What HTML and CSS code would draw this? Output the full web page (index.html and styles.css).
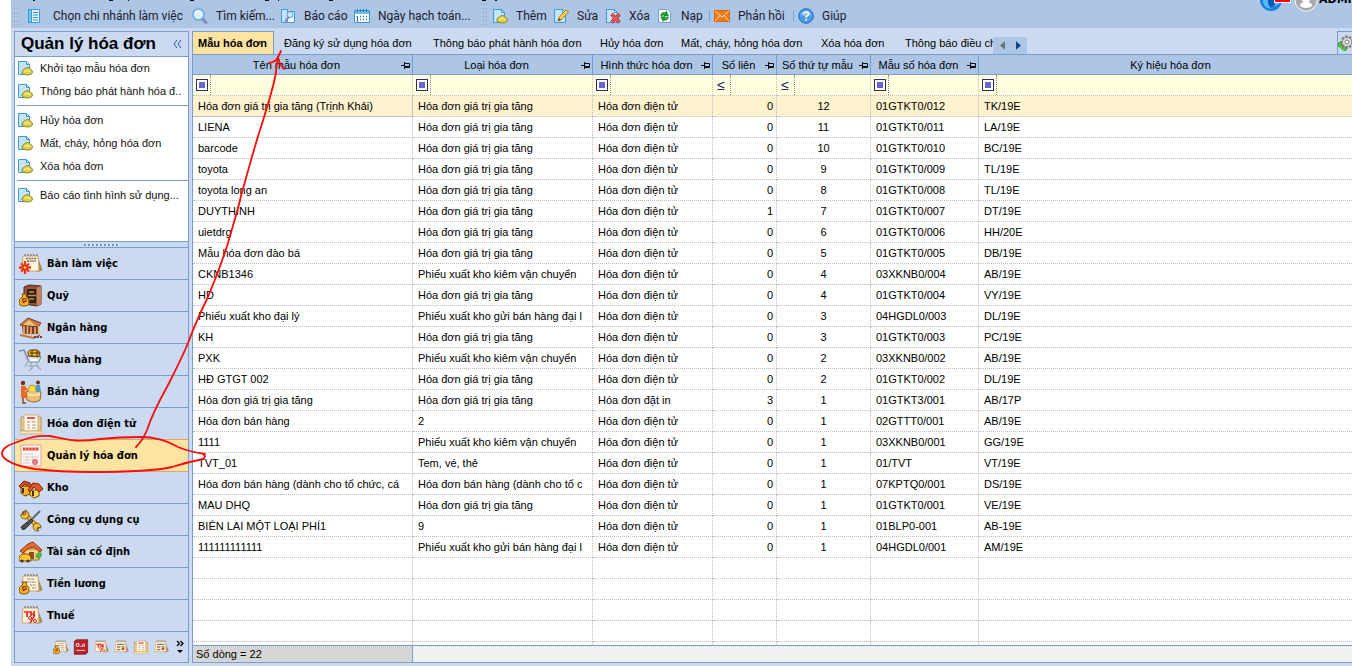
FILE: index.html
```html
<!DOCTYPE html>
<html lang="vi">
<head>
<meta charset="utf-8">
<title>Quản lý hóa đơn</title>
<link rel="stylesheet" href="styles.css">
</head>
<body>
<svg class="defs" aria-hidden="true">
  <defs>
    <symbol id="page" viewBox="0 0 16 16"><path d="M1.500 1.500h8l3 3v10h-11z" fill="#c4e4f8" stroke="#3d9ad8"/><path d="M9.500 1.500v3h3z" fill="#fff" stroke="#3d9ad8"/></symbol>
    <symbol id="doc" viewBox="0 0 16 16"><use href="#page"/><path d="M4 12.500h3" stroke="#8fc0e4"/><path d="M7 9.500q1-2 3.500-2t3 2q2 .5 2 2.500t-2.500 2.500q-2.500 1.200-5 0-3 .2-3-2.500 0-2 2-2.500z" fill="#ddd04e" stroke="#8d8622"/><path d="M7 11.500q3-2 6 0" stroke="#faf6a5" fill="none"/></symbol>
    <symbol id="branch" viewBox="0 0 16 16"><path d="M2.500 1.500h11v13h-11z" fill="#e6f5fd" stroke="#2f9bd6"/><path d="M2.500 1.500h3v13h-3z" fill="#7cc4ec" stroke="#2f9bd6"/><path d="M7 4.500h5M7 7h5M7 9.500h5M7 12h5" stroke="#2f8fca"/></symbol>
    <symbol id="search" viewBox="0 0 16 16"><path d="M10 10.500l4 4" stroke="#8c86c8" stroke-width="3" stroke-linecap="round"/><circle cx="6.500" cy="6.500" r="5.500" fill="#d9f1fd" stroke="#6fa9dc" stroke-width="1.500"/><path d="M3.500 6q.5-3 3-3" stroke="#fff" stroke-width="1.500" fill="none"/></symbol>
    <symbol id="report" viewBox="0 0 16 16"><path d="M1.500 1.500h6v13h-6z" fill="#c4e4f8" stroke="#3d9ad8"/><path d="M7.500 3.500h7v11h-7z" fill="#eff9fe" stroke="#3d9ad8"/><path d="M9 9l-4 4.500" stroke="#9a7fc4" stroke-width="2"/><circle cx="10" cy="6.500" r="3" fill="#c9e8fb" stroke="#4f9ddb"/></symbol>
    <symbol id="calendar" viewBox="0 0 16 16"><path d="M.5 2.500h15v12H.5z" fill="#fff" stroke="#3b96cc"/><path d="M1 3h14v3H1z" fill="#6dbbe5"/><path d="M3.500 1v3M6.500 1v3M9.500 1v3M12.500 1v3" stroke="#237db4"/><path d="M6 8.500h1m2 0h1m2 0h1M6 11.500h1m2 0h1m2 0h1" stroke="#1d75ac" stroke-width="1.500"/><path d="M3.500 8v5M2.500 13h2M2.500 9h1" stroke="#1d75ac"/></symbol>
    <symbol id="edit" viewBox="0 0 16 16"><use href="#page"/><path d="M5 13l1-3.500L13 2l2.500 2L8 12z" fill="#ffd15a" stroke="#a97817"/><path d="M5 13l1-3 2 1.700z" fill="#725019"/></symbol>
    <symbol id="delete" viewBox="0 0 16 16"><use href="#page"/><path d="M6.500 6l8 8.500M14.500 6l-8 8.500" stroke="#a02a35" stroke-width="3.500"/><path d="M6.500 6l8 8.500M14.500 6l-8 8.500" stroke="#f05a5e" stroke-width="2"/></symbol>
    <symbol id="refresh" viewBox="0 0 16 16"><path d="M1.500 1.500h9l3 3v10h-12z" fill="#f7fcff" stroke="#71a3cc"/><path d="M3.500 7.500Q4.500 3.500 8.500 4.700L9.500 3l2 5H6.500l1-1.500Q5.500 6 5 7.900zM11.500 9q-1 4-4.500 3l-1 1.500L3.700 8.800h5L7.500 10.500q2 .5 2.500-1.500z" fill="#19a025" stroke="#117a1a" stroke-width=".5"/></symbol>
    <symbol id="mail" viewBox="0 0 16 16"><path d="M.5 2.500h15v11H.5z" fill="#f77a18" stroke="#d9690e"/><path d="M1 3l7 6 7-6M1 13l5-5.500M15 13l-5-5.500" fill="none" stroke="#ffe1b8"/></symbol>
    <symbol id="help" viewBox="0 0 16 16"><circle cx="8" cy="8" r="7.300" fill="#4b9aec" stroke="#246bb8"/><path d="M2.500 7Q4 2.500 8 2.500T13.500 7Q8 9 2.500 7z" fill="#80bdf8"/><path d="M5.800 6Q6 4 8.200 4t2.200 2Q10.400 7.300 8.200 8.500v1.300" stroke="#fff" stroke-width="1.700" fill="none"/><path d="M7.300 11h1.800v1.700H7.300z" fill="#fff"/></symbol>
    <symbol id="gear" viewBox="0 0 16 16"><circle cx="9" cy="7" r="5.500" fill="#ddd" stroke="#777" stroke-width="2" stroke-dasharray="2.400 1.500"/><circle cx="9" cy="7" r="4.700" fill="#dedede" stroke="#888"/><circle cx="9" cy="7" r="2" fill="#fff" stroke="#777"/><path d="M1 7l3 2-1 1q2 3.500 6 3l-1 2.500Q3.500 15.500 1.500 11L0 11.500z" fill="#5cc83c" stroke="#278a1b" stroke-width=".7"/></symbol>
    <symbol id="pin" viewBox="0 0 10 7"><path d="M0 3.500h3M3.500 0v7M4 1.500h4.500v4H4M4 4.500h5" fill="none" stroke="#111"/></symbol>

    <symbol id="sheet" viewBox="0 0 24 24"><path d="M18 4l5 14-5 2z" fill="#b48a4d" stroke="#8a6534" stroke-width=".6"/><path d="M4 4h15l1 15H3z" fill="#fdf3dc" stroke="#caa774"/><path d="M6 4V2m3 2V2m3 2V2m3 2V2m3 2V2" stroke="#6c6252"/></symbol>
    <symbol id="bag" viewBox="0 0 24 24"><path d="M4 12l-1-2h5l-1 2q4 3 3 8-1 2-5 2t-5-2q-1-5 4-8z" fill="#f4b928" stroke="#7a4a0d"/><path d="M7.500 15q-4-1-4 1t3 1-3 2" stroke="#a12a0d" stroke-width="1.300" fill="none"/></symbol>
    <symbol id="desk" viewBox="0 0 24 24"><use href="#sheet"/><path d="M7 6.500h10M8 9h9" stroke="#76695a" stroke-width="1.300" stroke-dasharray="2 .7"/><path d="M6 9v13M0 15.500h12M2 11.500l8 8M10 11.500l-8 8" stroke="#f0371b" stroke-width="2.300"/><circle cx="6" cy="15.500" r="2" fill="#ffbf3a" stroke="#d32510"/></symbol>
    <symbol id="safe" viewBox="0 0 24 24"><path d="M5 3l5-2 12 1v18l-4 2-13-2z" fill="#9a5338" stroke="#55281a"/><path d="M8 5h9v14H8z" fill="#2e241b"/><path d="M9 11.500h8M10 8h5M10 15h5" stroke="#bd8b47" stroke-width="1.500"/><path d="M18 4l4-2v18l-4 2z" fill="#c48359"/><use href="#bag"/></symbol>
    <symbol id="bank" viewBox="0 0 24 24"><path d="M1 9l8-7 13 5-3 4z" fill="#d47b43" stroke="#743919"/><path d="M4 9l6-5 7 6z" fill="#f2c17c"/><path d="M3 10h17v8H4z" fill="#713c23"/><path d="M5 10v9M8.500 10v9M12 11v9M16 11v8M19.500 10v8" stroke="#eeb274" stroke-width="1.600"/><path d="M1 18l14 3 6-3v2l-6 3-14-3z" fill="#bb764a"/><path d="M15 21h8" stroke="#62402e" stroke-width="2" stroke-dasharray="2 1"/></symbol>
    <symbol id="buy" viewBox="0 0 24 24"><path d="M0 3l5-1 4 10h11" fill="none" stroke="#818b98" stroke-width="1.500"/><path d="M8 8h14l-2 6H10z" fill="#dce4ed" stroke="#7c8793"/><path d="M10 8q-3-6 3-6 7-1 8 3l-1 4z" fill="#f3b01f" stroke="#5e3b10"/><path d="M13 2v7M18 2v7M11 5h10" stroke="#413018"/><path d="M9 13l-3 6M12 14l1 6-3 3M17 13l2 6 3 3M9 18h9" fill="none" stroke="#a5afba" stroke-width="1.500"/><path d="M12 12h6" stroke="#fff" stroke-width="2"/></symbol>
    <symbol id="sell" viewBox="0 0 24 24"><path d="M7 12q8-4 15 0l-1 8q-6 4-13 0z" fill="#edbf74" stroke="#9a6a2a"/><path d="M9 14q6 2 12 0" stroke="#fae4ad" fill="none" stroke-width="2"/><path d="M8 11l4-6 4 1 1 5" fill="#ffe23b" stroke="#c38e18"/><circle cx="4" cy="3" r="2.200" fill="#6f3216"/><path d="M2 6h4l4 5-4-1 2 8H2z" fill="#ee6a20"/><path d="M4 18v5h3" stroke="#8a4a24" stroke-width="1.500" fill="none"/><circle cx="19" cy="2.500" r="2" fill="#62351e"/><path d="M17 5h4l1 7h-5z" fill="#4d99d2"/></symbol>
    <symbol id="einvoice" viewBox="0 0 24 24"><path d="M2 5h20v14H2z" fill="#eecb8c" stroke="#be9455"/><path d="M5 3h14v16H5z" fill="#fffaf0" stroke="#caab7b"/><path d="M8 6h8" stroke="#e85440" stroke-width="2"/><path d="M8 10h3m2 0h4M8 13h3m2 0h4M8 16h3m2 0h4" stroke="#b1966b"/><path d="M1 19h22v3H1z" fill="#fbe7ba" stroke="#c6a164" stroke-width=".7"/></symbol>
    <symbol id="invoice" viewBox="0 0 24 24"><path d="M2 1h20v21H2z" fill="#fdf7f3" stroke="#d4aaa0"/><path d="M4 5h16" stroke="#f23f31" stroke-width="3" stroke-dasharray="2.500 .6"/><path d="M4 10h10M4 13h16M4 16h16M4 19h8M8 12v7M14 12v7" stroke="#d5cbd0"/><circle cx="16" cy="18" r="2.500" fill="#f58584" stroke="#d45a67"/></symbol>
    <symbol id="stock" viewBox="0 0 24 24"><path d="M2 10h9v8l-5 2-4-3z" fill="#f1b72a" stroke="#723a0d"/><path d="M0 10l5-5 6 2 3 5-4-1-4-3-4 4z" fill="#de4a22" stroke="#74220f"/><path d="M11 14h9v6l-5 2-4-3z" fill="#ffdc3f" stroke="#78450c"/><path d="M9 14l5-7 6 1 4 5-4 3-5-5-4 5z" fill="#e25625" stroke="#80230f"/><path d="M4 12v5M14 15v5" stroke="#473019" stroke-width="2"/></symbol>
    <symbol id="tools" viewBox="0 0 24 24"><path d="M5 5l14 14" stroke="#704b12" stroke-width="4" stroke-linecap="round"/><path d="M5 5l14 14" stroke="#f2b33d" stroke-width="2.500"/><path d="M2 6q-1 5 5 5l3-3Q10 3 6 2l1 4-2 1z" fill="#ffc43e" stroke="#825710"/><path d="M17 15q5 0 5 5l-3-1-1 2 2 2q-6 0-6-5z" fill="#ffc43e" stroke="#825710"/><path d="M21 3l-8 8" stroke="#5c6876" stroke-width="2"/><path d="M12 11l2 2-8 8q-3 2-4-2z" fill="#56534d" stroke="#292725"/></symbol>
    <symbol id="asset" viewBox="0 0 24 24"><path d="M5 9h15v11H5z" fill="#f6d080" stroke="#9a6d2d"/><path d="M1 11L9 4l5-2 9 8-2 2-6-5-5 1-6 5z" fill="#ee6a2c" stroke="#8e3313"/><path d="M10 12h5v7h-5z" fill="#865027"/><path d="M0 17l3-3h6l3 3v4H0z" fill="#ffc331" stroke="#87570d"/><circle cx="3" cy="21" r="1.500" fill="#333"/><circle cx="9" cy="21" r="1.500" fill="#333"/><path d="M18 13l4-1 1 4-3 3-4-2z" fill="#55b23b"/></symbol>
    <symbol id="salary" viewBox="0 0 24 24"><use href="#sheet"/><path d="M8 7h8M8 10h9M11 13h6M13 16h4" stroke="#8f8370" stroke-dasharray="2 .5"/><use href="#bag" /></symbol>
    <symbol id="tax" viewBox="0 0 24 24"><use href="#sheet"/><path d="M5 8h6M8 8v5M12 7v5m3-5v5m-3-2h3" stroke="#e42b20" stroke-width="1.700"/><path d="M16 11l-5 8" stroke="#d92820" stroke-width="1.500"/><circle cx="11" cy="14" r="1.500" fill="none" stroke="#d92820"/><circle cx="16" cy="17" r="1.500" fill="none" stroke="#d92820"/></symbol>
    <symbol id="book" viewBox="0 0 24 24"><path d="M2 3l4-2h16v19l-3 3H2z" fill="#ba2028" stroke="#7c1018"/><path d="M5 7h4v4H5zM11 11h4V7M17 7v5M5 17h13" stroke="#ffd9cf" stroke-width="1.500" fill="none"/></symbol>
    <symbol id="chart" viewBox="0 0 24 24"><use href="#sheet"/><path d="M6 8h11M6 12h5m2 0h4M6 16h5" stroke="#8d7759" stroke-width="2"/><path d="M13 15h4" stroke="#e04727" stroke-width="3"/></symbol>
  </defs>
</svg>

<div class="app">
  <header class="toolbar">
    <svg class="clipped-menu" width="500" height="1" aria-hidden="true"><path d="M22 .5h2M98 .5h4M117 .5h1M179 .5h4M254 .5h4M267 .5h1M318 .5h4M471 .5h4M484 .5h2" stroke="#111"/></svg>
    <nav class="tools">
      <i class="grip"></i>
      <button class="tool wide"><svg><use href="#branch"/></svg>Chọn chi nhánh làm việc</button>
      <button class="tool"><svg><use href="#search"/></svg>Tìm kiếm...</button>
      <button class="tool"><svg><use href="#report"/></svg>Báo cáo</button>
      <button class="tool"><svg><use href="#calendar"/></svg>Ngày hạch toán...</button>
      <i class="grip"></i>
      <button class="tool"><svg><use href="#doc"/></svg>Thêm</button>
      <button class="tool"><svg><use href="#edit"/></svg>Sửa</button>
      <button class="tool"><svg><use href="#delete"/></svg>Xóa</button>
      <button class="tool"><svg><use href="#refresh"/></svg>Nạp</button>
      <i class="bar"></i>
      <button class="tool"><svg><use href="#mail"/></svg>Phản hồi</button>
      <i class="bar"></i>
      <button class="tool"><svg><use href="#help"/></svg>Giúp</button>
    </nav>
    <div class="user">
      <svg width="60" height="12" viewBox="0 0 60 12" aria-hidden="true"><circle cx="12" cy="0" r="11" fill="#1683e3"/><path d="M4 2Q5 8 13 9q-5-3-4-9h5l1 6q4 0 6-4V0H4z" fill="#57bdf8"/><path d="M9 0h6l1 5-4 2q-3-3-3-7z" fill="#0a55b4"/><path d="M15 0h17v3H15z" fill="#fff"/><path d="M16 0h15v2H16z" fill="#f00"/><circle cx="47" cy="0" r="11.500" fill="#ececec"/><circle cx="47" cy="0" r="10.500" fill="#aaa"/><ellipse cx="47" cy="5" rx="6" ry="3" fill="#fff"/><circle cx="47" cy="-1" r="4" fill="#fff"/></svg>
      <span>ADMIN</span>
    </div>
  </header>

  <div class="body">
    <aside class="sidebar">
      <div class="side-title"><h1>Quản lý hóa đơn</h1><button class="collapse" aria-label="Thu gọn"><svg width="9" height="8" viewBox="0 0 9 8"><path d="M4 0L1 4l3 4M8 0L5 4l3 4" fill="none" stroke="#2f5ca3"/></svg></button></div>
      <div class="links">
        <a href="#"><svg><use href="#doc"/></svg>Khởi tạo mẫu hóa đơn</a>
        <a href="#"><svg><use href="#doc"/></svg>Thông báo phát hành hóa đ..</a>
        <hr>
        <a href="#"><svg><use href="#doc"/></svg>Hủy hóa đơn</a>
        <a href="#"><svg><use href="#doc"/></svg>Mất, cháy, hỏng hóa đơn</a>
        <a href="#"><svg><use href="#doc"/></svg>Xóa hóa đơn</a>
        <hr>
        <a href="#"><svg><use href="#doc"/></svg>Báo cáo tình hình sử dụng...</a>
      </div>
      <div class="splitter"><i></i></div>
      <nav class="modules">
        <button><svg><use href="#desk"/></svg>Bàn làm việc</button>
        <button><svg><use href="#safe"/></svg>Quỹ</button>
        <button><svg><use href="#bank"/></svg>Ngân hàng</button>
        <button><svg><use href="#buy"/></svg>Mua hàng</button>
        <button><svg><use href="#sell"/></svg>Bán hàng</button>
        <button><svg><use href="#einvoice"/></svg>Hóa đơn điện tử</button>
        <button class="active"><svg><use href="#invoice"/></svg>Quản lý hóa đơn</button>
        <button><svg><use href="#stock"/></svg>Kho</button>
        <button><svg><use href="#tools"/></svg>Công cụ dụng cụ</button>
        <button><svg><use href="#asset"/></svg>Tài sản cố định</button>
        <button><svg><use href="#salary"/></svg>Tiền lương</button>
        <button><svg><use href="#tax"/></svg>Thuế</button>
      </nav>
      <div class="more">
        <button aria-label="Giá thành"><svg><use href="#salary"/></svg></button>
        <button aria-label="Sổ cái"><svg><use href="#book"/></svg></button>
        <button aria-label="Thuế"><svg><use href="#tax"/></svg></button>
        <button aria-label="Báo cáo"><svg><use href="#chart"/></svg></button>
        <button aria-label="Hợp đồng"><svg><use href="#einvoice"/></svg></button>
        <button aria-label="Ngân sách"><svg><use href="#chart"/></svg></button>
        <button aria-label="Thêm" class="chev"><svg viewBox="0 0 8 14"><path d="M1 1l2.500 2.500L1 6M4.500 1L7 3.500 4.500 6" fill="none" stroke="#000" stroke-width="1.300"/><path d="M1 10h6l-3 3z"/></svg></button>
      </div>
    </aside>

    <main class="main">
      <div class="tabs">
        <div class="tab-list" role="tablist">
          <button role="tab" class="active">Mẫu hóa đơn</button>
          <button role="tab">Đăng ký sử dụng hóa đơn</button>
          <button role="tab">Thông báo phát hành hóa đơn</button>
          <button role="tab">Hủy hóa đơn</button>
          <button role="tab">Mất, cháy, hỏng hóa đơn</button>
          <button role="tab">Xóa hóa đơn</button>
          <button role="tab">Thông báo điều chỉnh</button>
        </div>
        <div class="scroller">
          <button aria-label="Trước"><svg viewBox="0 0 6 10"><path d="M6 0v10L0 5z" fill="#707078"/></svg></button>
          <button aria-label="Sau"><svg viewBox="0 0 6 10"><path d="M0 0v10l6-5z" fill="#123f96"/></svg></button>
        </div>
        <button class="gear" aria-label="Tùy chọn"><svg><use href="#gear"/></svg></button>
      </div>

      <div class="grid">
        <table>
          <colgroup><col class="c1"><col class="c2"><col class="c3"><col class="c4"><col class="c5"><col class="c6"><col></colgroup>
          <thead>
            <tr>
              <th><div>Tên mẫu hóa đơn<svg><use href="#pin"/></svg></div></th>
              <th><div>Loại hóa đơn<svg><use href="#pin"/></svg></div></th>
              <th><div>Hình thức hóa đơn<svg><use href="#pin"/></svg></div></th>
              <th><div>Số liên<svg><use href="#pin"/></svg></div></th>
              <th><div>Số thứ tự mẫu<svg><use href="#pin"/></svg></div></th>
              <th><div>Mẫu số hóa đơn<svg><use href="#pin"/></svg></div></th>
              <th class="last">Ký hiệu hóa đơn</th>
            </tr>
            <tr class="filter">
              <td><div><button class="box" aria-label="Điều kiện"></button><input aria-label="Lọc tên mẫu"></div></td>
              <td><div><button class="box" aria-label="Điều kiện"></button><input aria-label="Lọc loại"></div></td>
              <td><div><button class="box" aria-label="Điều kiện"></button><input aria-label="Lọc hình thức"></div></td>
              <td><div><button class="le">≤</button><input aria-label="Lọc số liên"></div></td>
              <td><div><button class="le">≤</button><input aria-label="Lọc số thứ tự"></div></td>
              <td><div><button class="box" aria-label="Điều kiện"></button><input aria-label="Lọc mẫu số"></div></td>
              <td><div><button class="box" aria-label="Điều kiện"></button><input aria-label="Lọc ký hiệu"></div></td>
            </tr>
          </thead>
          <tbody>
            <tr class="selected"><td>Hóa đơn giá trị gia tăng (Trịnh Khải)</td><td>Hóa đơn giá trị gia tăng</td><td>Hóa đơn điện tử</td><td>0</td><td>12</td><td>01GTKT0/012</td><td>TK/19E</td></tr>
            <tr><td>LIENA</td><td>Hóa đơn giá trị gia tăng</td><td>Hóa đơn điện tử</td><td>0</td><td>11</td><td>01GTKT0/011</td><td>LA/19E</td></tr>
            <tr><td>barcode</td><td>Hóa đơn giá trị gia tăng</td><td>Hóa đơn điện tử</td><td>0</td><td>10</td><td>01GTKT0/010</td><td>BC/19E</td></tr>
            <tr><td>toyota</td><td>Hóa đơn giá trị gia tăng</td><td>Hóa đơn điện tử</td><td>0</td><td>9</td><td>01GTKT0/009</td><td>TL/19E</td></tr>
            <tr><td>toyota long an</td><td>Hóa đơn giá trị gia tăng</td><td>Hóa đơn điện tử</td><td>0</td><td>8</td><td>01GTKT0/008</td><td>TL/19E</td></tr>
            <tr><td>DUYTHINH</td><td>Hóa đơn giá trị gia tăng</td><td>Hóa đơn điện tử</td><td>1</td><td>7</td><td>01GTKT0/007</td><td>DT/19E</td></tr>
            <tr><td>uietdrg</td><td>Hóa đơn giá trị gia tăng</td><td>Hóa đơn điện tử</td><td>0</td><td>6</td><td>01GTKT0/006</td><td>HH/20E</td></tr>
            <tr><td>Mẫu hóa đơn đào bá</td><td>Hóa đơn giá trị gia tăng</td><td>Hóa đơn điện tử</td><td>0</td><td>5</td><td>01GTKT0/005</td><td>DB/19E</td></tr>
            <tr><td>CKNB1346</td><td>Phiếu xuất kho kiêm vận chuyển</td><td>Hóa đơn điện tử</td><td>0</td><td>4</td><td>03XKNB0/004</td><td>AB/19E</td></tr>
            <tr><td>HD</td><td>Hóa đơn giá trị gia tăng</td><td>Hóa đơn điện tử</td><td>0</td><td>4</td><td>01GTKT0/004</td><td>VY/19E</td></tr>
            <tr><td>Phiếu xuất kho đại lý</td><td>Phiếu xuất kho gửi bán hàng đại l</td><td>Hóa đơn điện tử</td><td>0</td><td>3</td><td>04HGDL0/003</td><td>DL/19E</td></tr>
            <tr><td>KH</td><td>Hóa đơn giá trị gia tăng</td><td>Hóa đơn điện tử</td><td>0</td><td>3</td><td>01GTKT0/003</td><td>PC/19E</td></tr>
            <tr><td>PXK</td><td>Phiếu xuất kho kiêm vận chuyển</td><td>Hóa đơn điện tử</td><td>0</td><td>2</td><td>03XKNB0/002</td><td>AB/19E</td></tr>
            <tr><td>HĐ GTGT 002</td><td>Hóa đơn giá trị gia tăng</td><td>Hóa đơn điện tử</td><td>0</td><td>2</td><td>01GTKT0/002</td><td>DL/19E</td></tr>
            <tr><td>Hóa đơn giá trị gia tăng</td><td>Hóa đơn giá trị gia tăng</td><td>Hóa đơn đặt in</td><td>3</td><td>1</td><td>01GTKT3/001</td><td>AB/17P</td></tr>
            <tr><td>Hóa đơn bán hàng</td><td>2</td><td>Hóa đơn điện tử</td><td>0</td><td>1</td><td>02GTTT0/001</td><td>AB/19E</td></tr>
            <tr><td>1111</td><td>Phiếu xuất kho kiêm vận chuyển</td><td>Hóa đơn điện tử</td><td>0</td><td>1</td><td>03XKNB0/001</td><td>GG/19E</td></tr>
            <tr><td>TVT_01</td><td>Tem, vé, thẻ</td><td>Hóa đơn điện tử</td><td>0</td><td>1</td><td>01/TVT</td><td>VT/19E</td></tr>
            <tr><td>Hóa đơn bán hàng (dành cho tổ chức, cá</td><td>Hóa đơn bán hàng (dành cho tổ c</td><td>Hóa đơn điện tử</td><td>0</td><td>1</td><td>07KPTQ0/001</td><td>DS/19E</td></tr>
            <tr><td>MAU DHQ</td><td>Hóa đơn giá trị gia tăng</td><td>Hóa đơn điện tử</td><td>0</td><td>1</td><td>01GTKT0/001</td><td>VE/19E</td></tr>
            <tr><td>BIÊN LAI MỘT LOẠI PHÍ1</td><td>9</td><td>Hóa đơn điện tử</td><td>0</td><td>1</td><td>01BLP0-001</td><td>AB-19E</td></tr>
            <tr><td>111111111111</td><td>Phiếu xuất kho gửi bán hàng đại l</td><td>Hóa đơn điện tử</td><td>0</td><td>1</td><td>04HGDL0/001</td><td>AM/19E</td></tr>
            <tr><td></td><td></td><td></td><td></td><td></td><td></td><td></td></tr>
            <tr><td></td><td></td><td></td><td></td><td></td><td></td><td></td></tr>
            <tr><td></td><td></td><td></td><td></td><td></td><td></td><td></td></tr>
            <tr><td></td><td></td><td></td><td></td><td></td><td></td><td></td></tr>
            <tr><td></td><td></td><td></td><td></td><td></td><td></td><td></td></tr>
          </tbody>
        </table>
      </div>
      <footer class="summary"><span>Số dòng = 22</span></footer>
    </main>
  </div>
</div>

<svg class="ink" width="300" height="480" aria-hidden="true">
  <g fill="none" stroke="#f80d10" stroke-width="1.800" stroke-linecap="round" stroke-linejoin="round">
    <path d="M136 447Q143 440 147 430C152 415 158 403 167 387C175 371 182 358 188 343C196 322 200 313 207 299C214 283 222 262 228 243C233 225 238 210 241 196C246 178 253 152 260 130C268 105 274 85 276 72Q277 62 278 57L281 51"/>
    <path d="M269 63Q276 62 278 57L280 64L284 69"/>
    <path d="M205 454Q190 452 178 447C165 440 155 437 140 437Q120 437 100 439C75 443 66 439 50 436Q35 435 20 441C5 446 2 449 2 454C3 460 15 466 35 469Q60 472 90 472C130 472 155 471 172 467Q188 462 203 459Q208 455 200 453"/>
  </g>
</svg>
</body>
</html>
```

FILE: styles.css
```css
* { box-sizing: border-box; }

body {
  margin: 0;
  height: 100vh;
  overflow: hidden;
  background: #fff;
  color: #000;
  font: 11px/14px "Liberation Sans", Arial, sans-serif;
}

button, input {
  margin: 0;
  padding: 0;
  border: 0;
  border-radius: 0;
  background: none;
  color: inherit;
  font: inherit;
}

.defs { position: absolute; width: 0; height: 0; }

.app {
  display: flex;
  flex-direction: column;
  height: 100%;
  margin-left: 11px;
  background: #cbdaf0;
}

/* Toolbar */
.toolbar {
  position: relative;
  display: flex;
  flex: none;
  height: 28px;
  overflow: hidden;
  background: #adc6e5;
}
.clipped-menu { position: absolute; top: 0; left: 0; }
.tools {
  display: grid;
  grid-template-columns: 15px 166px 88px 74px 126px 12px 61px 52px 52px 49px 8px 76px 8px 60px;
  align-items: center;
  flex: none;
  padding-top: 4px;
  font: 12px/16px Roboto, sans-serif;
  color: #1b1b2b;
}
.tool { display: flex; align-items: center; gap: 8px; white-space: nowrap; }
.tool svg { flex: none; width: 16px; height: 16px; }
.tool.wide svg { margin-right: 3px; }
.grip {
  align-self: stretch;
  width: 5px;
  margin: 0 0 2px 3px;
  background:
    linear-gradient(#9caec6, #9caec6) 0 0 / 1px 1px,
    conic-gradient(#9caec6 0 25%, transparent 0) -1px 1px / 3px 4px;
  background: conic-gradient(from 270deg at 1px 1px, #8fa0b8 0 25%, transparent 0) 0 0 / 3px 4px;
}
.bar { width: 1px; height: 12px; margin-left: 3px; background: #7da3d4; }
.user { display: flex; flex: none; align-items: flex-start; margin-left: auto; width: 93px; overflow: hidden; }
.user svg { flex: none; }
.user span { margin-top: -7px; font: bold 11px/14px "DejaVu Sans", sans-serif; }

.body { display: flex; flex: 1; min-height: 0; padding: 3px 0 3px 3px; gap: 3px; }

/* Sidebar */
.sidebar {
  display: flex;
  flex: none;
  flex-direction: column;
  width: 175px;
  border: 1px solid #7a9ecb;
}
.side-title {
  display: flex;
  flex: none;
  align-items: center;
  justify-content: space-between;
  height: 25px;
  padding: 0 6px;
  border-bottom: 1px solid #7a9ecb;
}
.side-title h1 { margin: 0; font-size: 17px; line-height: 22px; white-space: nowrap; }
.collapse svg { display: block; }
.links { flex: 1; min-height: 0; overflow: hidden; background: #fff; }
.links a {
  display: flex;
  align-items: center;
  gap: 7px;
  height: 23px;
  padding: 0 0 2px 2px;
  color: #111;
  text-decoration: none;
  white-space: nowrap;
}
.links svg { flex: none; width: 16px; height: 16px; }
.links hr { margin: 2px 0 3px 2px; border: 0; border-top: 1px solid #7a9ecb; }
.splitter {
  display: flex;
  flex: none;
  justify-content: center;
  height: 6px;
  padding-top: 2px;
  border-top: 1px solid #7a9ecb;
}
.splitter i { width: 35px; height: 2px; background: repeating-linear-gradient(90deg, #6f94c8 0 2px, #eef4fc 2px 3px, transparent 3px 4px); }
.modules { display: flex; flex: none; flex-direction: column; }
.modules button {
  display: flex;
  align-items: center;
  gap: 4px;
  height: 32px;
  padding-left: 4px;
  border-top: 1px solid #7a9ecb;
  font: bold 11px/16px "DejaVu Sans Condensed", "DejaVu Sans", sans-serif;
  white-space: nowrap;
}
.modules svg { flex: none; width: 24px; height: 24px; }
.modules .active { background: #ffe3a0; border-top-color: #e3a565; }
.modules .active + button { border-top-color: #e3a565; }
.more {
  display: flex;
  flex: none;
  align-items: center;
  justify-content: flex-end;
  gap: 4px;
  height: 31px;
  padding-right: 4px;
  border-top: 1px solid #7a9ecb;
}
.more svg { display: block; width: 16px; height: 16px; }
.more .chev svg { width: 8px; height: 14px; margin-left: 3px; }

/* Tabs */
.main {
  display: flex;
  flex: 1;
  flex-direction: column;
  min-width: 0;
  border-left: 1px solid #7a9ecb;
}
.tabs { display: flex; flex: none; align-items: flex-end; height: 23px; }
.tab-list {
  display: grid;
  grid-template-columns: 81px 159px 167px 81px 140px 84px 88px;
  align-self: stretch;
  width: 800px;
  overflow: hidden;
}
.tab-list button { text-align: left; white-space: nowrap; }
.tab-list button:nth-child(2) { padding-left: 10px; }
.tab-list .active {
  padding-left: 5px;
  border: solid #7a9ecb;
  border-width: 1px 1px 0 0;
  background: #ffe3a0;
  font-weight: bold;
}
.scroller {
  display: flex;
  align-items: center;
  justify-content: center;
  gap: 11px;
  width: 34px;
  height: 17px;
  background: #adc6e5;
}
.scroller svg { display: block; width: 5px; height: 9px; }
.gear {
  align-self: stretch;
  width: 15px;
  margin-left: auto;
  overflow: hidden;
  border: solid #7a9ecb;
  border-width: 1px 0 0 1px;
}
.gear svg { display: block; width: 16px; height: 16px; }

/* Grid */
.grid { flex: 1; min-height: 0; overflow: hidden; border-top: 1px solid #7a9ecb; background: #fff; }
table { width: 100%; table-layout: fixed; border-collapse: separate; border-spacing: 0; }
.c1 { width: 220px; }
.c2 { width: 180px; }
.c3 { width: 120px; }
.c4 { width: 64px; }
.c5 { width: 94px; }
.c6 { width: 108px; }
th {
  height: 20px;
  padding: 0;
  border: solid #7a9ecb;
  border-width: 0 1px 1px 0;
  background: #adc6e5;
  font-weight: normal;
  white-space: nowrap;
}
th.last { padding-left: 10px; }
th:last-child, td:last-child { border-right: 0; }
th div { position: relative; padding-right: 12px; }
th svg { position: absolute; top: 4px; right: 1px; width: 10px; height: 7px; }
td {
  height: 21px;
  padding: 0 5px;
  overflow: hidden;
  border: dotted #bdbdbd;
  border-width: 0 1px 1px 0;
  white-space: nowrap;
}
td:nth-child(4) { padding-right: 3px; text-align: right; }
td:nth-child(5) { text-align: center; }
.selected td { background: #fff2cf; }
.selected td:first-child { border-style: solid; }
.filter td { padding: 0; background: #ffffdf; }
.filter div { display: flex; height: 20px; }
.filter input { flex: 1; min-width: 0; border-left: 1px dotted #8f8f8f; }
.filter .box {
  width: 12px;
  height: 12px;
  margin: 4px 2px 4px 3px;
  border: 1px solid #2c2c66;
  background: #6464d2;
  box-shadow: inset 0 0 0 2px #fff;
}
.filter .le { width: 17px; padding-right: 1px; font-size: 14px; color: #2c2c66; }

.summary {
  display: flex;
  flex: none;
  height: 18px;
  border: solid #7a9ecb;
  border-width: 1px 0;
  background: #f0f0f0;
}
.summary span { width: 220px; padding: 1px 3px; border-right: 1px solid #7a9ecb; background: #d6d6d6; }

/* Pen marks over the window */
.ink { position: absolute; top: 0; left: 0; pointer-events: none; }
```
